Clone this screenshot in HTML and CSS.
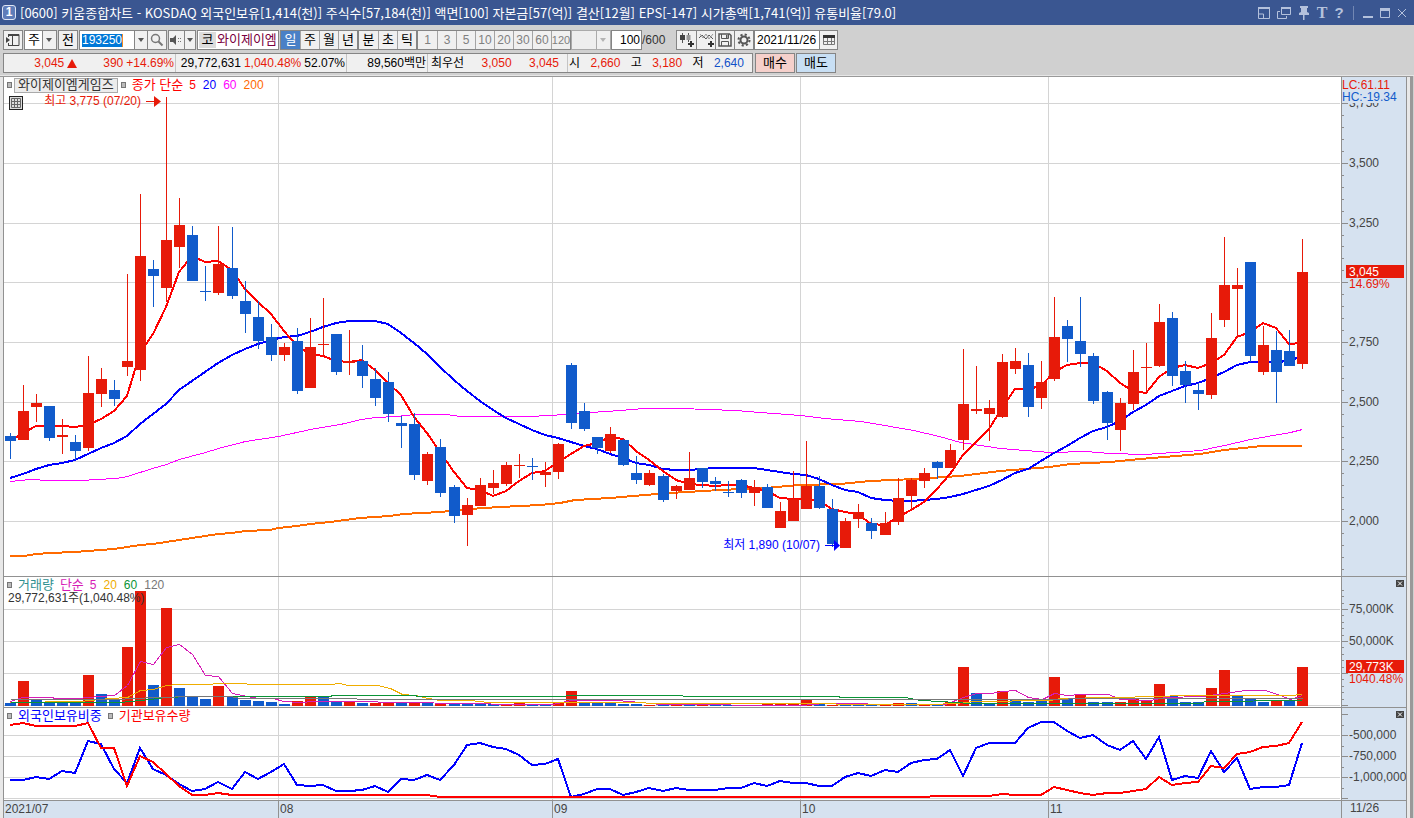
FILE: index.html
```html
<!DOCTYPE html>
<html lang="ko">
<head>
<meta charset="utf-8">
<title>[0600] 키움종합차트</title>
<link rel="stylesheet" href="styles.css">
</head>
<body>
<header class="titlebar">
  <span class="win-no">1</span>
  <h1 class="title">[0600] 키움종합차트 - KOSDAQ 외국인보유[1,414(천)] 주식수[57,184(천)] 액면[100] 자본금[57(억)] 결산[12월] EPS[-147] 시가총액[1,741(억)] 유통비율[79.0]</h1>
  <div class="win-tools">
    <button aria-label="화면 축소"><svg width="12" height="12" viewBox="0 0 12 12"><path d="M.5 1h11v10.500H.5z M.5 7h5v4.500" fill="none" stroke="currentColor"/><path d="M0 0h12v2H0z" fill="currentColor"/></svg></button>
    <button aria-label="화면 복제"><svg width="14" height="12" viewBox="0 0 14 12"><path d="M4.500 1h9v6.500h-9z M3 4.500H.5v7h9V9" fill="none" stroke="currentColor"/><path d="M4 0h10v2H4z" fill="currentColor"/></svg></button>
    <button aria-label="고정"><svg width="12" height="14" viewBox="0 0 12 14"><path d="M2 0h8v2H9v4l2 1v2H1V7l2-1V2H2z M5 9h1.500v5H5z" fill="currentColor"/></svg></button>
    <button class="glyph serif" aria-label="글꼴">T</button>
    <button class="glyph" aria-label="도움말">?</button>
    <i class="bar"></i>
    <button aria-label="최소화"><svg width="10" height="12" viewBox="0 0 10 12"><path d="M0 9h10v2H0z" fill="currentColor"/></svg></button>
    <button aria-label="최대화"><svg width="10" height="12" viewBox="0 0 10 12"><path d="M.5 2h9v8.500h-9z" fill="none" stroke="currentColor"/><path d="M0 1h10v3H0z" fill="currentColor"/></svg></button>
    <button aria-label="닫기"><svg width="10" height="12" viewBox="0 0 10 12"><path d="M1 2l8 8M9 2l-8 8" stroke="currentColor"/></svg></button>
  </div>
</header>

<div class="toolbar">
  <div class="row">
    <button class="btn icon" aria-label="패널 열기"><svg width="14" height="14" viewBox="0 0 14 14"><path d="M2.500 1v3M2.500 10v3M2 1.500h11v11H2M6.500 1v12" fill="none" stroke="#444"/><path d="M2 1h11v2H2z" fill="#444"/><path d="M0 4l4 3-4 3z" fill="#444"/></svg></button>
    <div class="combo period"><select aria-label="종목 구분"><option>주</option></select><span class="arrow"></span></div>
    <button class="btn icon">전</button>
    <div class="code">
      <input class="code-input" aria-label="종목코드" value="193250">
      <button class="drop" aria-label="최근 종목"><span class="arrow"></span></button>
      <button class="find" aria-label="종목 검색"><svg width="14" height="14" viewBox="0 0 14 14"><circle cx="5.500" cy="5.500" r="4" fill="none" stroke="#777" stroke-width="1.500"/><path d="M8.500 8.500l4 4" stroke="#777" stroke-width="2"/></svg></button>
    </div>
    <div class="sound">
      <button class="drop" aria-label="음성"><svg width="13" height="12" viewBox="0 0 13 12"><path d="M0 4h3l3-3v10l-3-3H0z" fill="#555"/><path d="M8 4h1v1H8zM8 7h1v1H8zM10 4h1v1h-1zM10 7h1v1h-1z" fill="#777"/></svg></button>
      <button class="drop small" aria-label="음성 설정"><span class="arrow"></span></button>
    </div>
    <div class="stock"><span class="market">코</span><input class="stock-name" aria-label="종목명" value="와이제이엠게임즈"></div>
    <div class="seg"><button class="on">일</button><button>주</button><button>월</button><button>년</button></div>
    <div class="seg"><button>분</button><button>초</button><button>틱</button></div>
    <div class="seg dim"><button>1</button><button>3</button><button>5</button><button>10</button><button>20</button><button>30</button><button>60</button><button>120</button></div>
    <div class="combo off"><select aria-label="주기" disabled><option></option></select><span class="arrow"></span></div>
    <input class="count" aria-label="표시 개수" value="100"><span class="total">/600</span>
    <div class="seg tools">
      <button aria-label="종목 추가"><svg width="15" height="14" viewBox="0 0 15 14"><path d="M3.500 0v10M9.500 0v9" stroke="#555"/><path d="M1 2h5v5H1z" fill="#444"/><path d="M7.500 2h4v5h-4z" fill="#999"/><path d="M12 8v6M9 11h6" stroke="#333" stroke-width="2"/></svg></button>
      <button aria-label="지표 추가"><svg width="15" height="14" viewBox="0 0 15 14"><path d="M0 5l3-3 4 4 3-4 4 4" fill="none" stroke="#555"/><path d="M1 1l3 4 3-4 3 5 4-5" fill="none" stroke="#999"/><path d="M12 8v6M9 11h6" stroke="#333" stroke-width="2"/></svg></button>
      <button aria-label="저장"><svg width="14" height="14" viewBox="0 0 14 14"><path d="M1 1h10.500L13 2.500V13H1z" fill="none" stroke="#555" stroke-width="1.500"/><path d="M3.500 1v4.500h7V1M3.500 13V8.500h7V13" fill="none" stroke="#555"/><path d="M8 2h1.500v3H8z" fill="#555"/></svg></button>
      <button aria-label="설정"><svg width="14" height="14" viewBox="0 0 14 14"><circle cx="7" cy="7" r="3.500" fill="none" stroke="#555" stroke-width="2"/><circle cx="7" cy="7" r="5.500" fill="none" stroke="#555" stroke-width="2" stroke-dasharray="2.160 2.160"/></svg></button>
    </div>
    <div class="date"><input aria-label="기준일" value="2021/11/26"><button aria-label="달력"><svg width="12" height="12" viewBox="0 0 12 12"><path d="M.5 1.500h11v9H.5zM4.500 4v6M8.500 4v6M1 7.500h10" fill="none" stroke="#777"/><path d="M0 1h12v3H0z" fill="#333"/></svg></button></div>
  </div>
  <div class="row">
    <div class="quote">
      <div class="cell c1"><b class="up">3,045</b><svg class="tri" width="10" height="9" viewBox="0 0 10 9"><path d="M5 0l5 9H0z" fill="#e71a09"/></svg><b class="up">390</b><b class="up">+14.69%</b></div>
      <div class="cell c2"><b>29,772,631</b><b class="up">1,040.48%</b><b>52.07%</b></div>
      <div class="cell c3"><b>89,560백만</b></div>
      <div class="cell c4"><b>최우선</b><b class="up">3,050</b><b class="up">3,045</b></div>
      <div class="cell c5"><b>시</b><b class="up">2,660</b><b>고</b><b class="up">3,180</b><b>저</b><b class="down">2,640</b></div>
    </div>
    <button class="order buy">매수</button>
    <button class="order sell">매도</button>
  </div>
</div>

<main class="board">
  <section class="plot">
    <svg class="canvas" id="price" role="img" aria-label="일봉 차트"></svg>
    <div class="legend"><i class="mark"></i><button class="name">와이제이엠게임즈</button><i class="mark"></i><span class="c-red">종가 단순</span><em class="c-red">5</em><em class="c-blue">20</em><em class="c-pink">60</em><em class="c-orange">200</em></div>
    <button class="grid-btn" aria-label="데이터 표"><svg width="10" height="10" viewBox="0 0 10 10"><path d="M.5.5h9v9h-9zM3.500 0v10M6.500 0v10M0 3.500h10M0 6.500h10" fill="none" stroke="#666"/></svg></button>
  </section>
  <section class="scale"><svg class="canvas" id="priceAxis"></svg></section>
  <section class="plot">
    <svg class="canvas" id="volume" role="img" aria-label="거래량"></svg>
    <div class="legend"><i class="mark"></i><span class="c-teal">거래량</span><span class="c-mag">단순</span><em class="c-mag">5</em><em class="c-yellow">20</em><em class="c-green">60</em><em class="c-gray">120</em></div>
    <p class="note">29,772,631주(1,040.48%)</p>
  </section>
  <section class="scale"><svg class="canvas" id="volumeAxis"></svg><button class="shut" aria-label="거래량 닫기"><svg width="8" height="7" viewBox="0 0 8 7"><path d="M2 1.500l4 4M6 1.500l-4 4" stroke="#fff"/></svg></button></section>
  <section class="plot">
    <svg class="canvas" id="holding" role="img" aria-label="보유 비중"></svg>
    <div class="legend"><i class="mark"></i><span class="c-blue">외국인보유비중</span><i class="mark"></i><span class="c-red">기관보유수량</span></div>
  </section>
  <section class="scale"><svg class="canvas" id="holdingAxis"></svg><button class="shut" aria-label="보유 닫기"><svg width="8" height="7" viewBox="0 0 8 7"><path d="M2 1.500l4 4M6 1.500l-4 4" stroke="#fff"/></svg></button></section>
  <section class="days"><svg class="canvas" id="dates"></svg></section>
  <section class="days last">11/26</section>
</main>
<script src="chart.js"></script>
</body>
</html>
```
FILE: styles.css
```css
* { box-sizing: border-box; }
body {
  margin: 0; min-height: 100vh; display: flex; flex-direction: column;
  background: #d0d0d0; color: #000;
  font: 12px/16px "Liberation Sans", "Noto Sans CJK KR", sans-serif;
}
button, input, select { font: inherit; color: inherit; margin: 0; padding: 0; border: 0; border-radius: 0; background: none; min-width: 0; }
button { display: flex; align-items: center; justify-content: center; cursor: pointer; }
b, em { font-weight: normal; font-style: normal; }

.titlebar { display: flex; align-items: center; height: 25px; padding: 0 7px 0 2px; background: #3a5691; color: #fff; }
.win-no { width: 14px; height: 15px; border: 1px solid #dfe6f4; border-radius: 3px; background: #5f7db9; font: bold 12px/13px "Liberation Sans", sans-serif; text-align: center; }
.title { flex: 1; margin: 0; padding-left: 4px; font: 13px/24px "Noto Sans CJK KR", sans-serif; white-space: nowrap; overflow: hidden; }
.win-tools { display: flex; align-items: center; gap: 7px; color: #b4c1dc; }
.glyph { width: 10px; font: bold 15px/16px "Liberation Sans", sans-serif; }
.serif { font-family: "Liberation Serif", serif; font-size: 16px; }
.bar { width: 1px; height: 14px; margin: 0 2px; background: #7287b3; }

.toolbar { padding: 5px 3px 2px; height: 51px; display: flex; flex-direction: column; gap: 3px; border-bottom: 1px solid #e6e6e6; }
.row { display: flex; height: 20px; }
.row > * { flex: none; }
.btn, .combo, .code, .sound, .stock, .seg, .count, .date, .quote, .order { border: 1px solid #858585; background: #f0f0f0; height: 20px; }
.btn, .combo, .code, .sound, .stock { margin-right: 1px; }
.btn.icon { width: 20px; font-size: 13px; }
.arrow { width: 0; height: 0; border: 3px solid transparent; border-top: 4px solid #555; border-bottom: 0; align-self: center; justify-self: center; pointer-events: none; }
.combo { display: grid; grid-template-columns: 1fr 14px; width: 33px; }
.combo select { grid-area: 1 / 1 / 2 / 3; appearance: none; padding-left: 3px; font-size: 13px; background: linear-gradient(to left, #f0f0f0 13px, #858585 13px, #858585 14px, #fff 14px); opacity: 1; }
.combo .arrow { grid-area: 1 / 2 / 2 / 3; }
.combo.off { width: 40px; margin-right: 0; border-color: #aaa; }
.combo.off select { background: linear-gradient(to left, #f0f0f0 13px, #aaa 13px, #aaa 14px, #eee 14px); }
.combo.off .arrow { border-top-color: #b4b4b4; }
.code { display: flex; width: 88px; background: #fff; }
.code-input { width: 54px; height: 18px; padding-left: 2px; color: #fff; background: linear-gradient(to right, #0078d7 40px, #f08a24 40px) no-repeat 2px 3px / 41px 13px; }
.drop { width: 13px; border-left: 1px solid #858585; background: #f0f0f0; }
.find { width: 19px; border-left: 1px solid #858585; background: #f0f0f0; }
.sound { display: flex; width: 28px; }
.sound .drop:first-child { width: 15px; border-left: 0; }
.drop.small { width: 11px; }
.stock { display: flex; width: 82px; background: #fff; padding: 1px; font-size: 13px; }
.market { width: 17px; text-align: center; background: #dcdcdc; }
.stock-name { width: 61px; padding-left: 1px; color: #7a0040; }
.seg { display: flex; }
.seg button { width: 19px; border-left: 1px solid #a4a4a4; font-size: 13px; }
.seg button:first-child { border-left: 0; }
.seg .on { background: #4a80c6; color: #fff; }
.seg.dim button { color: #808080; font-size: 12px; }
.seg.dim button:last-child { font-size: 11px; }
.seg.tools { margin-left: 8px; }
.seg.tools button { border-left-color: #858585; }
.count { width: 31px; background: #fff; text-align: right; padding-right: 1px; }
.total { width: 26px; line-height: 20px; color: #333; }
.date { display: flex; width: 84px; background: #fff; }
.date input { width: 64px; padding-left: 2px; font-size: 12px; }
.date button { width: 18px; border-left: 1px solid #858585; background: #f0f0f0; }

.quote { display: flex; width: 750px; }
.cell { display: flex; align-items: center; border-left: 1px solid #c4c4c4; white-space: nowrap; }
.cell:first-child { border-left: 0; }
.up { color: #e71a09; }
.down { color: #1150c8; }
.c1, .c2 { width: 171px; justify-content: flex-end; gap: 3px; padding-right: 1px; }
.c1 .tri { margin-right: 23px; }
.c3 { width: 81px; justify-content: flex-end; padding-right: 1px; }
.c4 { width: 140px; justify-content: space-between; padding: 0 8px 0 3px; }
.c5 { flex: 1; justify-content: space-between; padding: 0 8px 0 1px; }
.order { width: 40px; font-size: 13px; }
.buy { margin: 0 1px 0 2px; background: #f5d0cb; }
.sell { background: #c8dff4; }

.board {
  flex: 1; display: grid; grid-template-columns: minmax(0, 1fr) 66px; grid-template-rows: minmax(400px, 1fr) 131px 93px 17px;
  margin: 0 1px 0 0; border: solid #999; border-width: 1px 3px 0 0; background: #e8e8e8;
  padding: 0 3px 0 3px;
}
.plot, .scale { position: relative; min-width: 0; min-height: 0; overflow: hidden; border-bottom: 1px solid #919191; border-left: 1px solid #919191; background: #fff; }
.scale { border-right: 1px solid #919191; background: #d6e2f0; }
.canvas { display: block; position: absolute; inset: 0; width: 100%; height: 100%; font: 12px "Liberation Sans", "Noto Sans CJK KR", sans-serif; }
.legend { position: absolute; left: 3px; top: 0; display: flex; align-items: center; height: 16px; font-size: 13px; white-space: nowrap; }
.legend em { font-size: 12px; margin-right: 7px; }
.legend span { margin-right: 6px; }
.mark { width: 5px; height: 6px; margin-right: 6px; border: 1px solid #777; background: #bbb; }
.name { height: 15px; margin: 0 3px 0 -4px; padding: 0 3px; border: 1px solid #aaa; background: #ececec; color: #333; font-size: 13px; }
.grid-btn { position: absolute; left: 5px; top: 19px; width: 14px; height: 14px; border: 1px solid #222; background: #ddd; }
.note { position: absolute; left: 4px; top: 15px; margin: 0; line-height: 12px; color: #333; }
.c-red { color: #f00; } .c-blue { color: #00f; } .c-pink { color: #f0f; } .c-orange { color: #ff6a00; }
.c-teal { color: #2f9090; } .c-mag { color: #d61cb6; } .c-yellow { color: #efad00; } .c-green { color: #0a9436; } .c-gray { color: #777; }
.shut { position: absolute; right: 2px; top: 3px; width: 8px; height: 7px; background: #444; }
.days { position: relative; min-width: 0; border-left: 1px solid #919191; background: #d6e2f0; color: #444; }
.days.last { padding-left: 8px; line-height: 15px; border-right: 1px solid #919191; }

.canvas line, .canvas rect, .canvas polyline { shape-rendering: crispEdges; }
.canvas polyline { fill: none; }
```
FILE: chart.js
```js
const RED = '#e71a09', BLUE = '#115bcb', GRID = '#d4d4d4', TICK = '#8c8c8c';

// u/d, then high, body top, body bottom, low
const candles = `d433,436,441,459 u385,411,440,440 u394,403,407,422 d406,406,438,441 u419,435,437,454 d435,442,451,460 u356,393,448,451 u368,379,394,407 d380,390,399,406 u274,361,367,376
u194,256,370,381 d260,269,276,307 u97,240,288,302 u198,225,247,268 d226,235,281,281 d266,291,292,301 u226,264,293,295 d227,268,296,299 d281,301,314,333 d301,317,341,349
d324,337,355,361 u343,347,355,361 d328,341,391,394 u318,347,388,388 u298,344,345,356 d334,334,372,375 u330,361,363,375 d345,361,376,388 d368,379,398,406 d372,382,414,422
d416,423,426,448 d413,424,475,480 u452,454,481,485 d439,447,493,497 d485,487,516,523 u498,505,515,546 u478,485,506,506 u470,483,488,494 u462,465,484,486 u454,465,466,478
d458,466,467,480 u462,472,475,487 u443,444,472,479 d363,365,423,429 d403,411,429,431 d437,437,448,454 u427,434,451,453 d439,440,465,466 d456,473,480,484 u470,473,485,486
d474,476,500,502 u485,486,491,499 u452,478,490,490 d468,468,482,488 d477,481,484,491 d481,492,493,497 d479,480,493,498 u480,487,493,506 d484,487,508,508 u502,511,528,528
u471,499,521,521 u441,486,509,509 d476,486,508,509 d499,509,544,547 u518,521,548,548 u504,512,519,528 d518,523,531,539 u512,523,535,535 u478,498,522,525 u478,480,496,510
u468,473,481,488 d461,462,468,479 u444,450,468,468 u349,404,440,450 u366,409,411,414 u400,408,414,441 u354,362,417,418 u348,361,369,374 d353,365,407,417 u361,382,398,409
u297,337,379,381 d320,326,339,362 d297,341,354,367 d353,356,401,404 d391,392,423,440 u398,403,430,451 u350,372,404,410 u343,367,368,392 u304,322,366,367 d312,318,376,386
d361,371,385,403 d383,390,394,410 u313,338,395,399 u237,285,320,327 u268,285,289,338 d262,262,356,362 u326,345,372,375 d331,350,372,403 d330,351,366,366 u239,272,364,369`
  .split(/\s+/).map(s => [s[0] === 'u', ...s.slice(1).split(',').map(Number)]);

const ma5 = [441,433,426,426,426,427,425,419,411,396,353,334,307,272,256,262,261,270,289,302,314,331,346,354,356,361,362,360,370,383,395,417,433,452,472,488,490,496,491,481,473,471,462,454,446,443,437,439,451,460,471,480,484,485,486,485,485,488,491,498,499,499,501,509,512,514,524,525,517,510,502,489,474,455,442,429,408,389,389,386,372,365,363,363,371,383,391,393,377,368,365,368,363,355,337,332,323,328,344,343];
const ma20 = [478,474,469,465,463,460,454,448,443,436,424,414,404,390,381,372,363,355,349,344,340,337,336,332,327,323,321,321,321,324,333,343,354,367,380,391,401,410,418,424,430,435,438,442,446,449,454,458,463,465,469,470,470,469,468,468,468,468,470,472,474,475,479,485,490,492,498,500,501,501,500,499,497,494,490,486,480,473,469,461,453,446,438,431,427,421,412,405,396,391,386,383,378,372,365,362,362,362,361,356];
const ma60 = '10,481 20,480 30,479 36,479 43,480 82,480 95,479 116,478 127,476 152,468 166,464 179,459 205,452 218,448 245,441 278,436 310,429 340,424 361,419 375,417 396,416 414,414 446,414 460,416 525,416 552,415 571,413 590,412 620,410 643,408 680,408 735,410 760,412 800,415 825,418 860,421 890,426 913,430 939,436 960,442 1000,448 1050,452 1085,451 1110,453 1145,454 1200,450 1224,445 1250,439 1290,432 1302,429';
const ma200 = '10,556 24,556 36,554 50,553 75,552 88,551 114,549 127,547 140,545 153,544 166,542 179,540 192,538 205,536 218,534 232,533 245,531 270,530 278,528 297,526 310,524 330,522 360,518 390,516 403,514 440,512 470,509 500,507 540,505 560,503 575,500 610,498 645,495 670,493 720,490 765,488 800,485 840,484 870,481 915,479 960,476 1000,471 1050,467 1070,464 1110,462 1140,459 1200,454 1224,450 1262,446 1302,446';

const volumes = 'd703 u681 d700 d702 d703 d703 u675 d694 d699 u647 u591 d685 u608 d688 d697 d699 u686 d697 d700 d701 d702 d704 u701 u697 d697 d702 u701 d703 u703 u702 d703 u703 d703 u703 d703 d704 d704 d704 u704 u703 d704 d704 u703 u691 d703 d703 d703 d704 d704 u705 d705 u705 d705 u705 d705 d705 u705 d705 u704 u704 u704 u700 d704 u705 d705 d705 d705 u705 u703 d703 u704 d705 u702 u667 d693 d703 u691 d700 d702 d701 u677 d699 u695 d702 d702 u702 u699 u700 u684 d696 d702 d702 u688 u670 d696 d699 d702 u701 d700 u667'.split(' ');
const volumeLines = [
  ['#d61cb6', '10,701 22,697 50,697 56,698 78,698 87,697 100,696 114,695 127,685 140,661 153,664 166,647 179,644 192,654 205,675 218,676 232,693 247,696 258,698 273,698 283,701 300,702 313,701 367,701 387,702 480,703 500,704 552,704 571,700 617,700 640,702 660,704 800,705 825,703 865,703 870,704 945,704 963,697 976,693 990,693 1003,691 1015,690 1028,697 1042,699 1054,693 1067,695 1080,694 1108,694 1120,699 1150,700 1165,697 1202,696 1224,693 1245,690 1265,690 1280,695 1290,699 1302,695'],
  ['#efad00', '10,702 80,701 110,698 127,697 140,690 153,689 166,685 178,684 210,684 215,683 278,684 330,684 340,683 347,685 377,685 390,688 402,694 415,695 428,698 440,700 470,700 488,702 640,702 650,703 830,703 840,704 930,704 955,703 975,701 1050,700 1060,698 1110,697 1160,696 1180,695 1290,695 1302,694'],
  ['#0a9436', '10,702 120,702 150,699 166,697 190,696 330,696 332,695 415,695 417,696 565,696 566,695 682,695 683,696 838,696 840,697 905,697 920,700 940,701 970,703 1200,703 1205,701 1302,700'],
  ['#777', '10,699 120,699 130,698 160,697 190,696 230,696 240,698 470,699 1067,699 1069,698 1302,698']
];
const foreign = [780,780,777,779,771,773,741,744,769,783,748,769,775,784,791,789,782,789,772,779,772,764,785,786,785,791,791,790,786,792,779,780,775,780,765,745,743,747,749,755,765,764,759,797,794,789,789,795,792,788,791,788,790,790,790,788,788,783,786,781,783,783,786,786,777,773,776,770,772,763,760,759,750,776,748,743,743,743,728,722,722,731,738,735,745,750,741,759,737,780,776,778,751,772,758,789,787,787,785,743];
const fund = [725,723,726,726,726,726,723,748,748,786,756,762,774,786,795,795,793,...Array(16).fill(795),...Array(38).fill(797),...Array(5).fill(796),794,795,795,795,787,790,793,795,793,793,791,789,777,785,783,782,766,768,754,752,747,746,743,722];

const months = [[278, '08'], [552, '09'], [800, '10'], [1048, '11']];

function tag(name, attrs, text) {
  const a = Object.entries(attrs).map(([k, v]) => `${k}="${v}"`).join(' ');
  return `<${name} ${a}>${text || ''}</${name}>`;
}
function panel(id, top, span) {
  const el = document.getElementById(id);
  const w = el.clientWidth, h = el.clientHeight;
  const X = v => Math.round((v - 4) * w / 1337);
  const Y = v => Math.round((v - top) * h / span);
  const C = i => Math.floor(6 + i * w * 0.00976822);
  const out = [];
  // odd widths sit on pixel centres, even widths on pixel edges
  const stroke = (pts, color, sw) => {
    const o = sw % 2 ? .5 : 0;
    out.push(tag('polyline', { points: pts.map(([x, y]) => `${x + o},${y + o}`).join(' '), stroke: color, 'stroke-width': sw }));
  };
  return {
    w, h, X, Y, C,
    rect: (x, y, rw, rh, fill) => out.push(tag('rect', { x, y, width: rw, height: rh, fill })),
    text: (x, y, s, fill, anchor = 'start') => out.push(tag('text', { x, y, fill, 'text-anchor': anchor }, s)),
    path: (d, fill) => out.push(tag('path', { d, fill })),
    series: (ys, color, sw) => stroke(ys.map((y, i) => [C(i), Y(y)]), color, sw),
    free: (s, color, sw) => stroke(s.split(' ').map(p => p.split(',').map(Number)).map(p => [X(p[0]), Y(p[1])]), color, sw),
    grid(rows) {
      rows.forEach(y => this.rect(0, Y(y), w - 1, 1, GRID));
      months.forEach(m => this.rect(X(m[0]), 0, 1, h, GRID));
    },
    done: () => { el.innerHTML = out.join(''); }
  };
}

function draw() {
  let p = panel('price', 77, 499);
  p.grid([103, 163, 223, 282, 342, 402, 461, 521]);
  p.free(ma200, '#ff6a00', 2);
  p.free(ma60, '#f0f', 1);
  p.series(ma20, '#00f', 2);
  p.series(ma5, '#f00', 2);
  candles.forEach(([up, hi, top, bottom, lo], i) => {
    const c = p.C(i), color = up ? RED : BLUE;
    p.rect(c, p.Y(hi), 1, p.Y(lo) - p.Y(hi), color);
    p.rect(c - 5, p.Y(top), 11, Math.max(1, p.Y(bottom) - p.Y(top)), color);
  });
  const hx = p.C(12), hy = p.Y(101), lx = p.C(64), ly = p.Y(545);
  p.text(hx - 25, hy + 4, '최고 3,775 (07/20)', RED, 'end');
  p.rect(hx - 20, hy, 9, 1, RED);
  p.path(`M${hx - 12} ${hy - 5}l7 5.500l-7 5.500z`, RED);
  p.text(lx - 25, ly + 4, '최저 1,890 (10/07)', '#00f', 'end');
  p.rect(lx - 20, ly, 10, 1, '#00f');
  p.path(`M${lx - 11} ${ly - 5}l6 5.500l-6 5.500z`, '#00f');
  p.done();

  p = panel('priceAxis', 77, 499);
  for (let v = 1800; v <= 3850; v += 50) {
    const y = p.Y(521 - (v - 2000) * .2387), major = v % 250 === 0;
    p.rect(0, y, major ? 6 : 2, 1, TICK);
    if (major && v !== 3000) p.text(7, y + 4, v.toLocaleString('en-US'), '#444');
  }
  p.rect(0, 0, 64, p.Y(103), '#d6e2f0');
  p.text(0, p.Y(89), 'LC:61.11', RED);
  p.text(0, p.Y(101), 'HC:-19.34', BLUE);
  p.rect(4, p.Y(265), 58, 13, RED);
  p.text(7, p.Y(265) + 11, '3,045', '#fff');
  p.text(7, p.Y(265) + 23, '14.69%', RED);
  p.done();

  p = panel('volume', 577, 130);
  p.grid([609, 641, 673, 705]);
  volumes.forEach((v, i) => {
    const y = p.Y(+v.slice(1));
    p.rect(p.C(i) - 5, y, 11, p.Y(706) - y, v[0] === 'u' ? RED : BLUE);
  });
  volumeLines.forEach(l => p.free(l[1], l[0], 1));
  p.done();

  p = panel('volumeAxis', 577, 130);
  for (let i = 0; i < 19; i++) p.rect(0, p.Y(705 - i * 6.4), i % 5 ? 2 : 6, 1, TICK);
  p.text(7, p.Y(609) + 4, '75,000K', '#444');
  p.text(7, p.Y(641) + 4, '50,000K', '#444');
  p.rect(4, p.Y(660), 58, 13, RED);
  p.text(7, p.Y(660) + 11, '29,773K', '#fff');
  p.text(7, p.Y(660) + 23, '1040.48%', RED);
  p.done();

  p = panel('holding', 708, 92);
  p.grid([735, 756, 777, 798]);
  p.series(foreign, '#00f', 2);
  p.series(fund, '#f00', 2);
  p.done();

  p = panel('holdingAxis', 708, 92);
  for (let i = 0; i <= 8; i++) p.rect(0, p.Y(714 + i * 10.5), i % 2 ? 2 : 6, 1, TICK);
  p.text(7, p.Y(735) + 4, '-500,000', '#444');
  p.text(7, p.Y(756) + 4, '-750,000', '#444');
  p.text(7, p.Y(777) + 4, '-1,000,000', '#444');
  p.done();

  p = panel('dates', 801, 17);
  p.text(1, 12, '2021/07', '#444');
  months.forEach(m => {
    p.rect(p.X(m[0]), 0, 1, p.h, '#919191');
    p.text(p.X(m[0]) + 2, 12, m[1], '#444');
  });
  p.done();
}

draw();
addEventListener('resize', draw);
```
